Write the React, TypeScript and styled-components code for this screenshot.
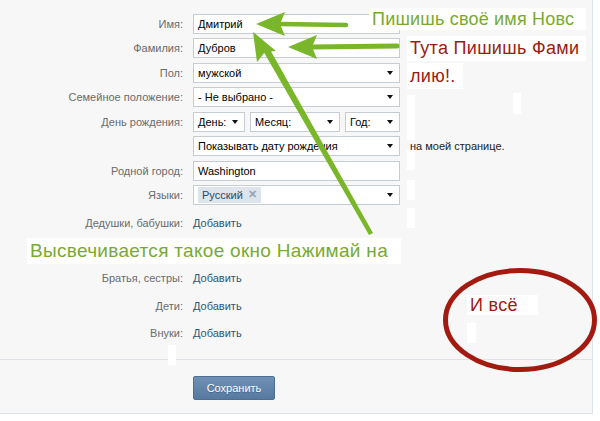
import styled, { createGlobalStyle } from "styled-components";

const Global = createGlobalStyle`
  body {
    margin: 0;
    background: #fff;
    font-family: "Liberation Sans", Arial, sans-serif;
  }
`;

const Page = styled.div`
  position: relative;
  width: 600px;
  height: 421px;
  overflow: hidden;
  background: #fff;
`;

const Panel = styled.div`
  width: 593px;
  height: 414px;
  background: #f7f7f7;
  border-right: 1px solid #dde3ea;
  border-bottom: 1px solid #dde3ea;
  box-sizing: border-box;
  display: flex;
  flex-direction: column;
`;

const Form = styled.div`
  padding: 13.5px 0 12px;
  display: flex;
  flex-direction: column;
  gap: 4.5px;
`;

const Row = styled.div<{ $h?: number; $after?: number }>`
  display: grid;
  grid-template-columns: 183px 207px auto;
  column-gap: 10px;
  align-items: center;
  height: ${(p) => p.$h ?? 20}px;
  margin-bottom: ${(p) => p.$after ?? 0}px;
  font-size: 11px;
`;

const LinkRows = styled.div`
  display: flex;
  flex-direction: column;
`;

const Label = styled.div`
  text-align: right;
  color: #6b6b6b;
  white-space: nowrap;
`;

const Input = styled.div`
  height: 20px;
  box-sizing: border-box;
  background: #fff;
  border: 1px solid #c5ccd4;
  padding: 0 4px;
  display: flex;
  align-items: center;
  color: #000;
`;

const Select = styled(Input)<{ $w?: number }>`
  justify-content: space-between;
  width: ${(p) => (p.$w ? `${p.$w}px` : "auto")};
  padding-right: 6px;
`;

const Caret = styled.span`
  width: 0;
  height: 0;
  border-left: 3.5px solid transparent;
  border-right: 3.5px solid transparent;
  border-top: 4px solid #111;
`;

const Dates = styled.div`
  display: flex;
  gap: 5px;
`;

const Hint = styled.div`
  color: #222;
  white-space: nowrap;
`;

const Token = styled.span`
  background: #dde4ec;
  color: #2b4a66;
  padding: 1px 4px 2px;
  display: inline-flex;
  align-items: center;
  gap: 5px;
`;

const TokenX = styled.span`
  color: #95a5b6;
  font-weight: bold;
  font-size: 11px;
`;

const Link = styled.span`
  color: #2b587a;
`;

const Footer = styled.div`
  border-top: 1px solid #dfe3e7;
  padding: 16px 0 0 193px;
`;

const Button = styled.div`
  width: 82px;
  height: 24px;
  box-sizing: border-box;
  border: 1px solid #4e6f94;
  border-radius: 2px;
  background: linear-gradient(#7090b5, #58799f);
  color: #fff;
  font-size: 11px;
  display: flex;
  align-items: center;
  justify-content: center;
  text-shadow: 0 1px 0 #45658a;
`;

const Overlay = styled.svg`
  position: absolute;
  left: 0;
  top: 0;
  pointer-events: none;
`;

const Note = styled.div<{ $x: number; $y: number; $w: number; $h: number; $c: string; $fs: number; $ls?: number }>`
  position: absolute;
  left: ${(p) => p.$x}px;
  top: ${(p) => p.$y}px;
  width: ${(p) => p.$w}px;
  height: ${(p) => p.$h}px;
  background: #fff;
  color: ${(p) => p.$c};
  font-family: "Liberation Sans", Arial, sans-serif;
  font-size: ${(p) => p.$fs}px;
  letter-spacing: ${(p) => p.$ls ?? 0.3}px;
  line-height: ${(p) => p.$h}px;
  padding-left: 3px;
  box-sizing: border-box;
  white-space: nowrap;
  overflow: hidden;
`;

const Patch = styled.div<{ $x: number; $y: number; $w: number; $h: number }>`
  position: absolute;
  left: ${(p) => p.$x}px;
  top: ${(p) => p.$y}px;
  width: ${(p) => p.$w}px;
  height: ${(p) => p.$h}px;
  background: #fff;
`;

const GREEN = "#7ab62a";
const TEXT_GREEN = "#78aa30";
const RED = "#9c1b12";

const relatives = ["Дедушки, бабушки:", "Братья, сестры:", "Дети:", "Внуки:"];

export default function App() {
  return (
    <Page>
      <Global />
      <Panel>
        <Form>
          <Row>
            <Label>Имя:</Label>
            <Input>Дмитрий</Input>
          </Row>
          <Row>
            <Label>Фамилия:</Label>
            <Input>Дубров</Input>
          </Row>
          <Row>
            <Label>Пол:</Label>
            <Select>
              мужской
              <Caret />
            </Select>
          </Row>
          <Row>
            <Label>Семейное положение:</Label>
            <Select>
              - Не выбрано -
              <Caret />
            </Select>
          </Row>
          <Row>
            <Label>День рождения:</Label>
            <Dates>
              <Select $w={52}>
                День:
                <Caret />
              </Select>
              <Select $w={90}>
                Месяц:
                <Caret />
              </Select>
              <Select $w={55}>
                Год:
                <Caret />
              </Select>
            </Dates>
          </Row>
          <Row>
            <span />
            <Select>
              Показывать дату рождения
              <Caret />
            </Select>
            <Hint>на моей странице.</Hint>
          </Row>
          <Row>
            <Label>Родной город:</Label>
            <Input>Washington</Input>
          </Row>
          <Row>
            <Label>Языки:</Label>
            <Select>
              <Token>
                Русский <TokenX>✕</TokenX>
              </Token>
              <Caret />
            </Select>
          </Row>
          <LinkRows>
            {relatives.map((r, i) => (
              <Row key={r} $h={27.5} $after={i === 0 ? 27.5 : 0}>
                <Label>{r}</Label>
                <Link>Добавить</Link>
              </Row>
            ))}
          </LinkRows>
        </Form>
        <Footer>
          <Button>Сохранить</Button>
        </Footer>
      </Panel>

      <Overlay width="600" height="421" viewBox="0 0 600 421">
        {/* arrow to first name */}
        <line x1="280" y1="24" x2="346" y2="25" stroke={GREEN} strokeWidth="4.5" strokeLinecap="round" />
        <polygon points="256,24 285,12 280,24 285,36" fill={GREEN} />
        {/* arrow to last name */}
        <line x1="310" y1="47" x2="397" y2="46" stroke={GREEN} strokeWidth="5" strokeLinecap="round" />
        <polygon points="288,47 317,35 312,47 317,59" fill={GREEN} />
        {/* diagonal arrow */}
        <polygon points="262,49 268,46 373,233 369,235" fill={GREEN} />
        <polygon points="253,32 276,51 265,52 257,62" fill={GREEN} />
        {/* ellipse */}
        <ellipse cx="520" cy="320" rx="74.5" ry="49.5" fill="none" stroke="#a31a10" strokeWidth="5" />
      </Overlay>

      <Patch $x={407} $y={95} $w={8} $h={45} />
      <Patch $x={513} $y={93} $w={8} $h={21} />
      <Patch $x={407} $y={150} $w={8} $h={20} />
      <Patch $x={407} $y={180} $w={8} $h={20} />
      <Patch $x={407} $y={208} $w={8} $h={20} />
      <Patch $x={168} $y={345} $w={8} $h={20} />
      <Patch $x={467} $y={323} $w={9} $h={20} />

      <Note $x={369} $y={8} $w={217} $h={22} $c={TEXT_GREEN} $fs={18} $ls={0.2}>
        Пишишь своё имя Новс
      </Note>
      <Note $x={407} $y={36} $w={179} $h={25} $c={RED} $fs={18}>
        Тута Пишишь Фами
      </Note>
      <Note $x={407} $y={63} $w={56} $h={26} $c={RED} $fs={18}>
        лию!.
      </Note>
      <Note $x={27} $y={238} $w={374} $h={26} $c={TEXT_GREEN} $fs={19} $ls={0.3}>
        Высвечивается такое окно Нажимай на
      </Note>
      <Note $x={467} $y={295} $w={71} $h={20} $c={RED} $fs={18}>
        И всё
      </Note>
    </Page>
  );
}
